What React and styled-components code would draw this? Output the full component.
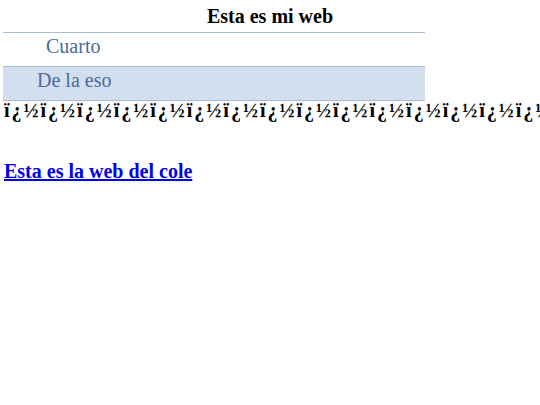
import React from "react";
import styled, { createGlobalStyle } from "styled-components";

const GlobalStyle = createGlobalStyle`
  body {
    margin: 0;
    background: #ffffff;
    font-family: "Liberation Serif", "Times New Roman", serif;
  }
`;

const Page = styled.div`
  padding: 6px 4px;
  overflow: hidden;
  width: 540px;
  box-sizing: border-box;
`;

const Title = styled.h1`
  margin: 0;
  font-size: 20px;
  font-weight: 700;
  text-align: center;
  color: #000;
  line-height: 20px;
`;

const Table = styled.table`
  width: 422px;
  margin-top: 6px;
  margin-left: -1px;
  border-collapse: collapse;
`;

const Tr = styled.tr`
  background: ${(p) => (p.$shaded ? "#d3dfee" : "transparent")};
`;

const Td = styled.td`
  height: 34px;
  padding: 0 0 7px ${(p) => p.$indent}px;
  box-sizing: border-box;
  border-top: 1px solid #a9bdd6;
  border-bottom: 1px solid #a9bdd6;
  font-size: 20px;
  color: #4a6a9c;
  vertical-align: middle;
`;

const Garbled = styled.p`
  margin: -1px 0 0;
  white-space: nowrap;
  font-size: 20px;
  font-weight: 700;
  letter-spacing: 2px;
  line-height: 20px;
`;

const CoolLink = styled.a`
  display: inline-block;
  margin-top: 40px;
  font-size: 20px;
  font-weight: 700;
  color: #0000ee;
  text-decoration: underline;
`;

function App() {
  const junk = "ï¿½".repeat(20);
  return (
    <>
      <GlobalStyle />
      <Page>
        <Title>Esta es mi web</Title>
        <Table>
          <tbody>
            <Tr>
              <Td $indent={43}>Cuarto</Td>
            </Tr>
            <Tr $shaded>
              <Td $indent={34}>De la eso</Td>
            </Tr>
          </tbody>
        </Table>
        <Garbled>{junk}</Garbled>
        <div>
          <CoolLink href="#">Esta es la web del cole</CoolLink>
        </div>
      </Page>
    </>
  );
}

export default App;
